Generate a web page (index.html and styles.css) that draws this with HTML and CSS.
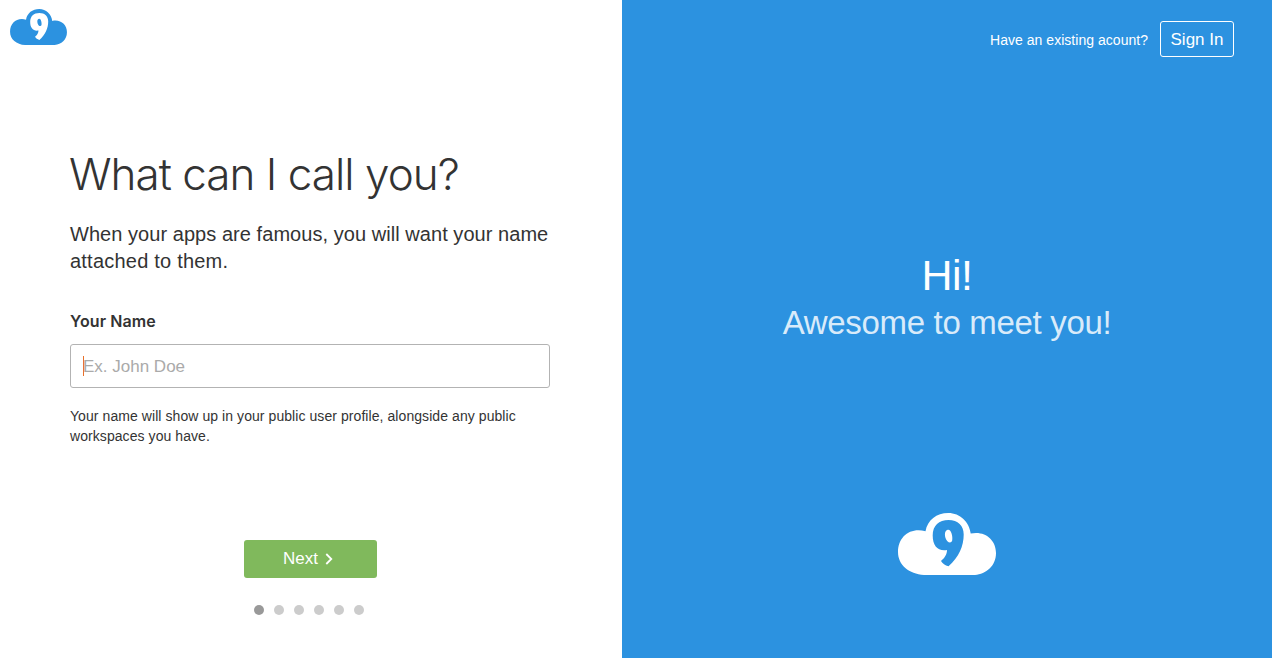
FILE: index.html
```html
<!DOCTYPE html>
<html lang="en">
<head>
<meta charset="utf-8">
<title>Sign up</title>
<link rel="stylesheet" href="styles.css">
</head>
<body>
<svg class="defs" aria-hidden="true">
  <symbol id="cloud9" viewBox="0 0 98 62">
    <path fill-rule="evenodd" d="M26 62C11 61 0 52 0 39C0 24 12 14 27.500 18.300C29.500 7 38.500 0 50.300 0C62 0 71.500 9 72.700 20.600C87 17.500 98 27 98 40C98 53 88 61 77 62ZM50.500 7C41 7 34.700 12.500 34.700 22.500C34.700 33 40 38.500 49 37C49 41.500 46.500 45 43 48C44.500 50.500 47 52.500 50.500 53.300C61 44 65.700 33 65.700 21.500C65.700 12.500 60 7 50.500 7ZM50 16.800C53 16.300 55 23 54.200 27.500C53.200 31 48.800 29.500 47.500 25C46.300 21 47 17.300 50 16.800Z"/>
  </symbol>
</svg>
<div class="page">
  <main class="signup">
    <svg class="logo"><use href="#cloud9"/></svg>
    <form class="form">
      <h1 class="title">What can I call you?</h1>
      <p class="lead">When your apps are famous, you will want your name<br><span class="lead-end">attached to them.</span></p>
      <label class="label" for="name">Your Name</label>
      <div class="field"><span class="caret"></span><input class="input" id="name" type="text" placeholder="Ex. John Doe"></div>
      <p class="hint">Your name will show up in your public user profile, alongside any public<br>workspaces you have.</p>
    </form>
    <div class="actions">
      <button class="next" type="button"><span>Next</span><svg class="chevron" viewBox="0 0 8 12"><path d="M1.300 1L6.300 6L1.300 11"/></svg></button>
      <div class="dots"><i class="dot active"></i><i class="dot"></i><i class="dot"></i><i class="dot"></i><i class="dot"></i><i class="dot"></i></div>
    </div>
  </main>
  <aside class="welcome">
    <div class="account"><span class="question">Have an existing acount?</span><a class="signin">Sign In</a></div>
    <div class="greeting"><div class="hi">Hi!</div><div class="meet">Awesome to meet you!</div></div>
    <svg class="big-logo"><use href="#cloud9"/></svg>
  </aside>
</div>
</body>
</html>
```
FILE: styles.css
```css
* { box-sizing: border-box; }
body { margin: 0; font-family: "Liberation Sans", Arial, sans-serif; color: #333; background: #fff; }
.defs { display: none; }
.page { display: flex; width: 1272px; height: 658px; overflow: hidden; }
.signup { display: flex; flex-direction: column; width: 622px; }
.logo { width: 57px; height: 36px; margin: 9px 0 0 10px; fill: #2c92e0; }
.form { width: 490px; margin: 102px 0 0 70px; }
.title { margin: 0 0 0 -1px; font: 300 44px/54px Inter, sans-serif; letter-spacing: -0.97px; white-space: nowrap; }
.lead { margin: 20px 0 0; font-size: 20px; line-height: 27px; letter-spacing: 0.05px; white-space: nowrap; }
.lead-end { letter-spacing: 0.22px; }
.label { display: block; margin-top: 35px; font: 600 16px/22px Inter, sans-serif; letter-spacing: 0.1px; }
.field { display: flex; align-items: center; width: 480px; height: 44px; margin-top: 12px; padding-left: 12px; border: 1px solid #b3b3b3; border-radius: 3px; }
.caret { width: 1px; height: 20px; background: #e8702a; }
.input { flex: 1; min-width: 0; margin: 2px 0 0 -1px; border: 0; padding: 0; outline: 0; background: none; font: 17px/20px "Liberation Sans", sans-serif; }
.input::placeholder { color: #aaa; opacity: 1; }
.hint { margin: 18px 0 0; font-size: 14px; line-height: 20px; letter-spacing: 0.07px; white-space: nowrap; }
.actions { display: flex; flex-direction: column; align-items: center; width: 133px; margin: 94px 0 0 244px; }
.next { display: flex; align-items: center; justify-content: center; gap: 7px; width: 133px; height: 38px; padding: 0 5px 0 0; border: 0; border-radius: 3px; background: #80b95c; color: #fff; font: 17px/38px "Liberation Sans", sans-serif; }
.chevron { width: 8px; height: 12px; fill: none; stroke: #fff; stroke-width: 1.8; }
.dots { display: flex; gap: 10px; margin: 27px 3px 0 0; }
.dot { width: 10px; height: 10px; border-radius: 50%; background: #ccc; }
.dot.active { background: #999; }
.welcome { display: flex; flex-direction: column; align-items: center; width: 650px; background: #2c92e0; color: #fff; }
.account { display: flex; align-items: center; align-self: flex-end; gap: 12px; margin: 21px 38px 0 0; }
.question { font-size: 14px; line-height: 20px; padding-top: 2px; letter-spacing: 0.03px; }
.signin { width: 74px; height: 36px; border: 1px solid #fff; border-radius: 3px; font-size: 17px; line-height: 35px; text-align: center; }
.greeting { margin-top: 192px; text-align: center; }
.hi { font-size: 43px; line-height: 52px; letter-spacing: -0.6px; }
.meet { font-size: 33px; line-height: 44px; letter-spacing: -0.32px; color: #d9ebfa; }
.big-logo { width: 98px; height: 62px; margin-top: 168px; fill: #fff; }
```
